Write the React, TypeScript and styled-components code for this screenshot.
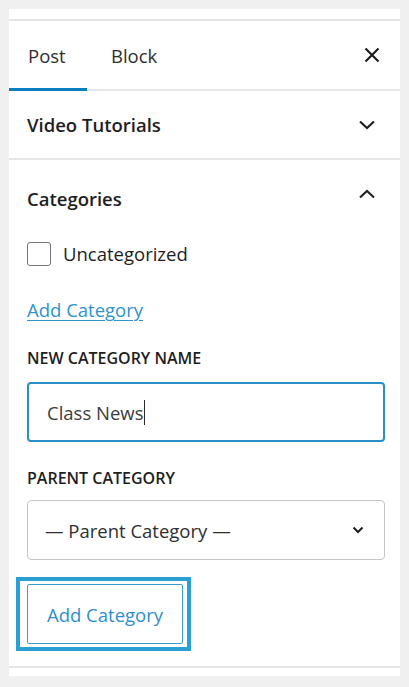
import React from "react";
import styled, { createGlobalStyle } from "styled-components";

const GlobalStyle = createGlobalStyle`
  html, body { margin: 0; padding: 0; background: #f0f0f0; }
  body { font-family: "Open Sans", "Noto Sans", sans-serif; -webkit-font-smoothing: antialiased; }
  * { box-sizing: border-box; }
`;

const Page = styled.div`
  padding: 9px 9px 10px 9px;
  background: #f0f0f0;
`;

const Panel = styled.div`
  width: 391px;
  background: #fff;
  display: flex;
  flex-direction: column;
`;

const TopStrip = styled.div`
  height: 12px;
  border-bottom: 2px solid #e6e6e6;
`;

const TabBar = styled.div`
  display: flex;
  align-items: stretch;
  height: 70px;
  border-bottom: 2px solid #e6e6e6;
`;

const Tab = styled.div<{ $active?: boolean }>`
  position: relative;
  display: flex;
  align-items: center;
  width: ${(p) => (p.$active ? "78px" : "auto")};
  padding-left: ${(p) => (p.$active ? "19px" : "24px")};
  font-size: 18.5px;
  color: #2f2f2f;
  ${(p) =>
    p.$active &&
    `
    &::after {
      content: "";
      position: absolute;
      left: 0;
      right: 0;
      bottom: -2px;
      height: 3px;
      background: #0a7cc2;
    }
  `}
`;

const CloseButton = styled.div`
  margin-left: auto;
  margin-right: 8px;
  width: 40px;
  display: flex;
  align-items: center;
  justify-content: center;
  color: #1e1e1e;
`;

const SectionHeader = styled.div<{ $height: number }>`
  display: flex;
  align-items: center;
  justify-content: space-between;
  height: ${(p) => p.$height}px;
  padding: 0 24px 0 18px;
`;

const SectionTitle = styled.div`
  font-size: 18.5px;
  font-weight: 600;
  color: #1e1e1e;
`;

const Section = styled.div`
  border-bottom: 2px solid #e6e6e6;
  display: flex;
  flex-direction: column;
`;

const ChevronIcon = styled.svg<{ $lift?: number }>`
  display: block;
  color: #1e1e1e;
  margin-bottom: ${(p) => (p.$lift ? p.$lift * 2 : 0)}px;
`;

const Body = styled.div`
  display: flex;
  flex-direction: column;
  padding: 0 15px 15px 18px;
`;

const CheckRow = styled.label`
  margin-top: 6px;
  display: flex;
  align-items: center;
  gap: 12px;
  font-size: 18.5px;
  color: #1e1e1e;
  line-height: 24px;
`;

const CheckBox = styled.span`
  width: 24px;
  height: 24px;
  border: 1.5px solid #757575;
  border-radius: 3px;
  background: #fff;
`;

const TextLink = styled.a`
  margin-top: 32px;
  align-self: flex-start;
  font-size: 18.5px;
  line-height: 24px;
  color: #2f93cd;
  text-decoration: underline;
  text-underline-offset: 3px;
  text-decoration-thickness: 1px;
`;

const FieldLabel = styled.div`
  margin-top: 26px;
  font-size: 16px;
  font-weight: 600;
  line-height: 20px;
  text-transform: uppercase;
  color: #1e1e1e;
`;

const InputBox = styled.div`
  margin-top: 14px;
  height: 60px;
  border: 2px solid #2a8fc6;
  border-radius: 4px;
  display: flex;
  align-items: center;
  padding-left: 18px;
  font-size: 18.5px;
  color: #3c3c3c;
`;

const Caret = styled.span`
  display: inline-block;
  width: 1px;
  height: 25px;
  background: #2a2a2a;
`;

const SelectBox = styled.div`
  margin-top: 12px;
  height: 60px;
  border: 1px solid #c5c5c5;
  border-radius: 4px;
  display: flex;
  align-items: center;
  justify-content: space-between;
  padding: 0 20px 0 17px;
  font-size: 18.5px;
  color: #2f2f2f;
`;

const FocusRing = styled.div`
  margin-top: 17px;
  margin-left: -11px;
  align-self: flex-start;
  border: 4px solid #2a9fd4;
  padding: 3px 4px 3px 7px;
  display: flex;
`;

const Button = styled.button`
  width: 156px;
  height: 60px;
  border: 1px solid #3b9bd0;
  border-radius: 2px;
  background: #fff;
  font-family: inherit;
  font-size: 18.5px;
  color: #2f8fca;
  padding: 0;
`;

const BottomStrip = styled.div`
  height: 8px;
`;

const CloseIcon = () => (
  <svg width="16" height="16" viewBox="0 0 16 16" fill="none">
    <path d="M1.5 1.5 L14.5 14.5 M14.5 1.5 L1.5 14.5" stroke="currentColor" strokeWidth="2.2" />
  </svg>
);

const Chevron = ({ up, lift }: { up?: boolean; lift?: number }) => (
  <ChevronIcon $lift={lift} width="18" height="10" viewBox="0 0 18 10" fill="none">
    <polyline
      points={up ? "2,8.5 9,2 16,8.5" : "2,1.5 9,8 16,1.5"}
      stroke="currentColor"
      strokeWidth="2.1"
      fill="none"
    />
  </ChevronIcon>
);

const SmallChevron = () => (
  <svg width="12" height="8" viewBox="0 0 12 8" fill="none">
    <polyline points="1.5,1.5 6,6 10.5,1.5" stroke="#1e1e1e" strokeWidth="2" fill="none" />
  </svg>
);

export default function App() {
  return (
    <>
      <GlobalStyle />
      <Page>
        <Panel>
          <TopStrip />
          <TabBar>
            <Tab $active>Post</Tab>
            <Tab>Block</Tab>
            <CloseButton>
              <CloseIcon />
            </CloseButton>
          </TabBar>
          <Section>
            <SectionHeader $height={67}>
              <SectionTitle>Video Tutorials</SectionTitle>
              <Chevron />
            </SectionHeader>
          </Section>
          <Section>
            <SectionHeader $height={76}>
              <SectionTitle>Categories</SectionTitle>
              <Chevron up lift={4} />
            </SectionHeader>
            <Body>
              <CheckRow>
                <CheckBox />
                Uncategorized
              </CheckRow>
              <TextLink href="#">Add Category</TextLink>
              <FieldLabel>New Category Name</FieldLabel>
              <InputBox>
                Class News
                <Caret />
              </InputBox>
              <FieldLabel>Parent Category</FieldLabel>
              <SelectBox>
                <span>— Parent Category —</span>
                <SmallChevron />
              </SelectBox>
              <FocusRing>
                <Button>Add Category</Button>
              </FocusRing>
            </Body>
          </Section>
          <BottomStrip />
        </Panel>
      </Page>
    </>
  );
}
